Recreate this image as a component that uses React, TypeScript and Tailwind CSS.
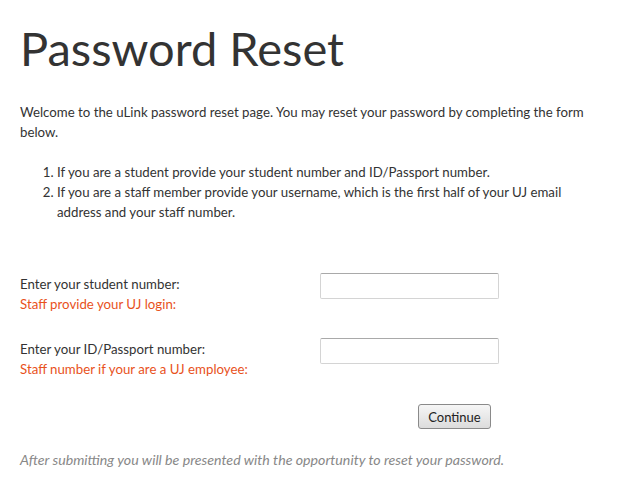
import React from 'react';

const font = { fontFamily: '"Source Sans Pro", Lato, "Open Sans", sans-serif' };

export default function App() {
  return (
    <div className="min-h-screen bg-white px-5 text-[13.25px] leading-5 text-[#333333]" style={font}>
      <h1 className="pt-[22px] text-[47px] leading-[52px] font-normal text-[#333333]">Password Reset</h1>

      <p className="mt-[28px] pr-2">
        Welcome to the uLink password reset page. You may reset your password by completing the form below.
      </p>

      <ol className="mt-5 list-decimal pl-[37px] pr-8">
        <li>If you are a student provide your student number and ID/Passport number.</li>
        <li>
          If you are a staff member provide your username, which is the first half of your UJ email address and
          your staff number.
        </li>
      </ol>

      <div className="mt-[51px] flex flex-col gap-[24px]">
        <div className="flex items-start">
          <div className="w-[300px] pt-[1px]">
            <div>Enter your student number:</div>
            <div className="text-[#e8521c]">Staff provide your UJ login:</div>
          </div>
          <input
            type="text"
            className="h-[26px] w-[179px] rounded-[2px] border border-[#d4d4d4] border-t-[#a9a9a9] bg-white"
          />
        </div>
        <div className="flex items-start">
          <div className="w-[300px] pt-[1px]">
            <div>Enter your ID/Passport number:</div>
            <div className="text-[#e8521c]">Staff number if your are a UJ employee:</div>
          </div>
          <input
            type="text"
            className="h-[26px] w-[179px] rounded-[2px] border border-[#d4d4d4] border-t-[#a9a9a9] bg-white"
          />
        </div>
      </div>

      <div className="mt-[25px] flex">
        <button className="ml-[398px] h-[25px] w-[73px] rounded-[3px] border border-[#8a8a8a] bg-gradient-to-b from-[#f6f6f6] to-[#dcdcdc] text-[13px] text-[#222]">
          Continue
        </button>
      </div>

      <p className="mt-[21px] text-[14.2px] italic text-[#888888]">
        After submitting you will be presented with the opportunity to reset your password.
      </p>
    </div>
  );
}
